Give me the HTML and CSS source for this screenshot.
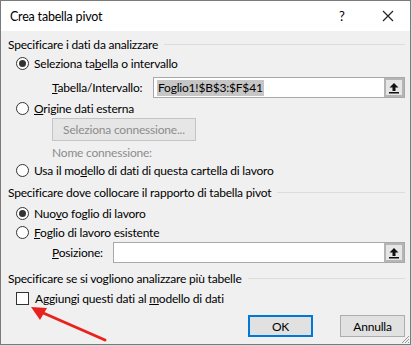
FILE: index.html
```html
<!DOCTYPE html>
<html lang="it">
  <head>
    <meta charset="UTF-8" />
    <title>Crea tabella pivot</title>
    <link rel="stylesheet" href="styles.css">
  </head>
  <body>
    <div class="dialog">
      <div class="titlebar">
        <span class="title">Crea tabella pivot</span>
        <span class="help">?</span>
        <svg class="close" width="12" height="12" viewBox="0 0 12 12">
          <path d="M1 1 L11 11 M11 1 L1 11" stroke="#222" stroke-width="1.2" fill="none" />
        </svg>
      </div>

      <div class="content">
        <div class="group-title h1"><span>Specificare i dati da analizzare</span><i></i></div>

        <label class="opt r1"><span class="radio on"></span><span>Seleziona ta<u>b</u>ella o intervallo</span></label>
        <div class="field tab-row">
          <span class="field-label"><u>T</u>abella/Intervallo:</span>
          <div class="input">
            <span class="sel">Foglio1!$B$3:$F$41</span>
            <span class="pick">
              <svg width="12" height="12" viewBox="0 0 12 12">
                <path d="M6 1 L10.5 5.5 L7.5 5.5 L7.5 9 L4.5 9 L4.5 5.5 L1.5 5.5 Z" fill="#111" />
                <rect x="1" y="10" width="10" height="1.5" fill="#111" />
              </svg>
            </span>
          </div>
        </div>

        <label class="opt r2"><span class="radio"></span><span><u>O</u>rigine dati esterna</span></label>
        <div class="field conn-row">
          <button class="btn disabled" disabled>Seleziona connessione...</button>
        </div>
        <div class="field nome-row"><span class="muted">Nome connessione:</span></div>
        <label class="opt r3"><span class="radio"></span><span>Usa il mo<u>d</u>ello di dati di questa cartella di lavoro</span></label>

        <div class="group-title h2"><span>Specificare dove collocare il rapporto di tabella pivot</span><i></i></div>
        <label class="opt r4"><span class="radio on"></span><span>Nuo<u>v</u>o foglio di lavoro</span></label>
        <label class="opt r5"><span class="radio"></span><span><u>F</u>oglio di lavoro esistente</span></label>
        <div class="field pos-row">
          <span class="field-label pos-label"><u>P</u>osizione:</span>
          <div class="input">
            <span class="pick">
              <svg width="12" height="12" viewBox="0 0 12 12">
                <path d="M6 1 L10.5 5.5 L7.5 5.5 L7.5 9 L4.5 9 L4.5 5.5 L1.5 5.5 Z" fill="#111" />
                <rect x="1" y="10" width="10" height="1.5" fill="#111" />
              </svg>
            </span>
          </div>
        </div>

        <div class="group-title h3"><span>Specificare se si vogliono analizzare più tabelle</span><i></i></div>
        <label class="opt r6"><span class="check"></span><span>Aggiungi questi dati al <u>m</u>odello di dati</span></label>

        <div class="actions">
          <button class="btn default">OK</button>
          <button class="btn">Annulla</button>
        </div>
      </div>

      <svg class="grip" width="10" height="10" viewBox="0 0 10 10">
        <path d="M9 2 L2 9 M9 5 L5 9 M9 8 L8 9" stroke="#9a9a9a" stroke-width="1" />
      </svg>

      <!-- freccia rossa di annotazione -->
      <svg class="annot" width="120" height="50" viewBox="0 0 120 50">
        <path d="M104 44 L40 16" stroke="#e8231e" stroke-width="3" stroke-linecap="round" />
        <path d="M30 11 L46 12 L39 24 Z" fill="#e8231e" />
      </svg>
    </div>
  </body>
</html>
```

FILE: styles.css
```css
body {
  margin: 0;
  background: #d9d9d9;
  font-family: 'Segoe UI', Lato, 'Liberation Sans', sans-serif;
  font-size: 12px;
  letter-spacing: -0.2px;
  color: #000;
}

.dialog {
  position: relative;
  width: 411px;
  height: 345px;
  box-sizing: border-box;
  border: 1px solid #7a7a7a;
  background: #f0f0f0;
}

.titlebar {
  height: 30px;
  background: #fff;
  display: flex;
  align-items: center;
  padding-left: 9px;
}

.title {
  flex: 1;
  font-size: 12.5px;
}

.help {
  width: 20px;
  font-size: 13px;
  margin-right: 23px;
}

.close {
  margin-right: 16px;
}

.content {
  padding: 0 5px 0 7px;
  display: flex;
  flex-direction: column;
}

.group-title {
  height: 18px;
  display: flex;
  align-items: center;
}

.group-title i {
  flex: 1;
  height: 1px;
  background: #dcdcdc;
  margin-left: 6px;
}

.h1 { margin-top: 4px; }
.h2 { margin-top: 4px; }
.h3 { margin-top: 6px; }

.opt {
  height: 18px;
  display: flex;
  align-items: center;
  padding-left: 8px;
}

.r1 { margin-top: 1px; }
.r2 { margin-top: 1px; }
.r4 { margin-top: 3px; }
.r5 { margin-top: 1px; }
.r6 { margin-top: 2px; }

.radio {
  width: 11px;
  height: 11px;
  border: 1px solid #333;
  border-radius: 50%;
  background: #fff;
  margin-right: 5px;
  display: flex;
  align-items: center;
  justify-content: center;
}

.radio.on::after {
  content: '';
  width: 7px;
  height: 7px;
  border-radius: 50%;
  background: #333;
}

.check {
  width: 11px;
  height: 11px;
  border: 1px solid #333;
  background: #fff;
  margin-right: 6px;
}

.field {
  display: flex;
  align-items: center;
  padding-left: 44px;
}

.field-label {
  width: 101px;
}

.pos-label {
  width: 61px;
}

.tab-row {
  margin-top: 5px;
  height: 21px;
}

.pos-row {
  margin-top: 1px;
  height: 21px;
}

.input {
  flex: 1;
  height: 21px;
  box-sizing: border-box;
  border: 1px solid #a9a9a9;
  background: #fff;
  display: flex;
  align-items: center;
  padding-left: 3px;
}

.sel {
  background: #c6c6c6;
  line-height: 16px;
  padding: 0 1px;
}

.pick {
  margin-left: auto;
  width: 20px;
  height: 19px;
  box-sizing: border-box;
  border: 2px solid #b5b5b5;
  background: #e6e6e6;
  display: flex;
  align-items: center;
  justify-content: center;
}

.conn-row {
  margin-top: 1px;
  height: 23px;
}

.nome-row {
  margin-top: 2px;
  height: 18px;
}

.muted {
  color: #8c8c8c;
}

.btn {
  font-family: inherit;
  font-size: 12px;
  letter-spacing: inherit;
  height: 23px;
  box-sizing: border-box;
  border: 1px solid #adadad;
  background: #e1e1e1;
  color: #000;
  padding: 0;
}

.btn.disabled {
  width: 144px;
  color: #8c8c8c;
  background: #e6e6e6;
  border-color: #c4c4c4;
}

.actions {
  margin-top: 8px;
  display: flex;
  justify-content: flex-end;
  gap: 27px;
}

.actions .btn {
  width: 65px;
  height: 22px;
}

.btn.default {
  border: 2px solid #0078d7;
}

.grip {
  position: absolute;
  right: 0;
  bottom: 0;
}

.annot {
  position: absolute;
  left: 0;
  top: 295px;
}
```
